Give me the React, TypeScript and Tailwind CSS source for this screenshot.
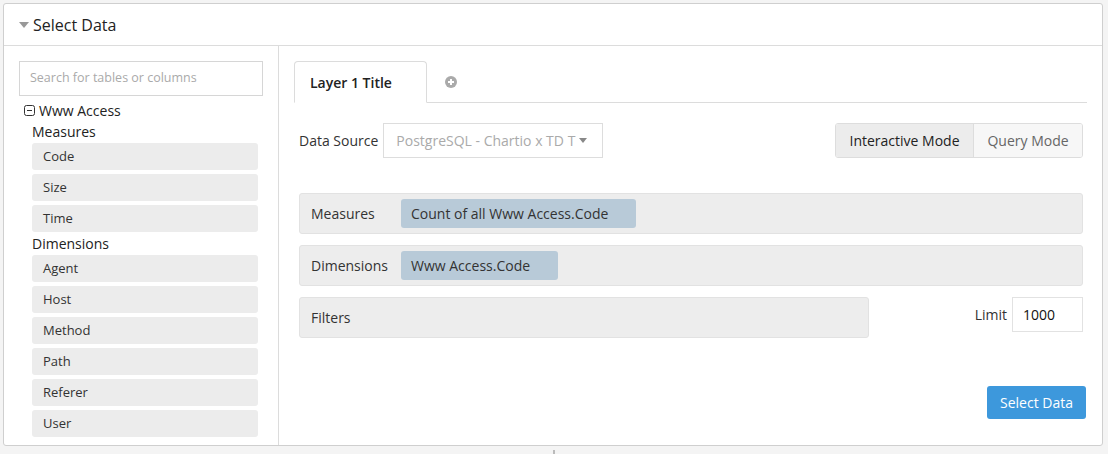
import { Fragment } from "react";

const measures = ["Code", "Size", "Time"];
const dimensions = ["Agent", "Host", "Method", "Path", "Referer", "User"];

function FieldItem({ label }: { label: string }) {
  return (
    <div className="flex h-[27px] items-center rounded-[3px] bg-[#ececec] pl-[11px] text-[13px] text-[#333]">
      {label}
    </div>
  );
}

function QueryRow({ label, pill, className }: { label: string; pill?: string; className?: string }) {
  return (
    <div
      className={`flex h-[41px] items-center rounded-[3px] border border-[#e2e2e2] bg-[#ededed] pl-[11px] ${className ?? ""}`}
    >
      <span className="w-[90px] text-[14px] text-[#333]">{label}</span>
      {pill && (
        <span className="flex h-[29px] items-center rounded-[3px] bg-[#b8cad8] pl-[10px] pr-[28px] text-[14px] text-[#333]">
          {pill}
        </span>
      )}
    </div>
  );
}

export default function App() {
  return (
    <div
      className="h-[454px] w-[1108px] bg-[#f4f4f4] pl-[3px] pt-[3px] text-[#333]"
      style={{ fontFamily: '"Open Sans", "Liberation Sans", sans-serif' }}
    >
      <div className="flex h-[443px] w-[1100px] flex-col rounded-[3px] border border-[#cfcfcf] bg-white">
        {/* header */}
        <div className="flex h-[42px] shrink-0 items-center border-b border-[#dcdcdc] pl-[15px]">
          <svg width="10" height="6" viewBox="0 0 10 6" className="mr-[4px] mt-[1px]">
            <path d="M0 0h10L5 6z" fill="#999" />
          </svg>
          <span className="text-[16px] text-[#222]">Select Data</span>
        </div>

        <div className="flex min-h-0 flex-1">
          {/* sidebar */}
          <div className="w-[275px] shrink-0 border-r border-[#dcdcdc] pl-[15px] pr-[15px] pt-[15px]">
            <div className="flex h-[35px] w-[244px] items-center border border-[#d6d6d6] pl-[10px] text-[12.5px] text-[#aaa]">
              Search for tables or columns
            </div>
            <div className="mt-[4px] flex h-[20px] items-center pl-[5px] text-[14px] text-[#222]">
              <svg width="11" height="11" viewBox="0 0 11 11" className="mr-[4px]">
                <rect x="0.5" y="0.5" width="10" height="10" rx="2" fill="none" stroke="#333" />
                <path d="M3 5.5h5" stroke="#333" />
              </svg>
              Www Access
            </div>
            <div className="ml-[13px] w-[226px]">
              {[
                ["Measures", measures],
                ["Dimensions", dimensions],
              ].map(([title, items]) => (
                <Fragment key={title as string}>
                  <div className="text-[14px] leading-[23px] text-[#222]">{title as string}</div>
                  <div className="flex flex-col gap-[4px]">
                    {(items as string[]).map((m) => (
                      <FieldItem key={m} label={m} />
                    ))}
                  </div>
                </Fragment>
              ))}
            </div>
          </div>

          {/* main */}
          <div className="flex-1 pl-[15px] pr-[15px] pt-[15px]">
            <div className="flex h-[42px] items-end border-b border-[#dcdcdc]">
              <div className="mb-[-1px] flex h-[42px] w-[133px] items-center rounded-t-[4px] border border-b-white border-[#dcdcdc] bg-white pl-[15px] text-[14px] font-semibold text-[#222]">
                Layer 1 Title
              </div>
              <div className="flex h-[41px] items-center pl-[18px]">
                <svg width="12" height="12" viewBox="0 0 12 12">
                  <circle cx="6" cy="6" r="6" fill="#aaa" />
                  <path d="M6 3v6M3 6h6" stroke="#fff" strokeWidth="2" />
                </svg>
              </div>
            </div>

            <div className="mt-[20px] flex items-center pl-[5px]">
              <span className="text-[14px] text-[#333]">Data Source</span>
              <div className="ml-[5px] flex h-[35px] w-[220px] items-center border border-[#ddd] pl-[12px] text-[14px] text-[#aaa]">
                PostgreSQL - Chartio x TD T
                <svg width="8" height="5" viewBox="0 0 8 5" className="ml-[4px]">
                  <path d="M0 0h8L4 5z" fill="#888" />
                </svg>
              </div>
              <div className="ml-auto mr-[4px] flex h-[35px] overflow-hidden rounded-[3px] border border-[#ddd] text-[14px]">
                <div className="flex w-[138px] items-center justify-center border-r border-[#ddd] bg-[#ececec] text-[#222]">
                  Interactive Mode
                </div>
                <div className="flex w-[108px] items-center justify-center bg-[#f7f7f7] text-[#666]">
                  Query Mode
                </div>
              </div>
            </div>

            <div className="mt-[35px] flex flex-col gap-[11px] pl-[5px] pr-[4px]">
              <QueryRow label="Measures" pill="Count of all Www Access.Code" />
              <QueryRow label="Dimensions" pill="Www Access.Code" />
              <div className="flex items-start">
                <QueryRow label="Filters" className="w-[570px]" />
                <div className="ml-auto flex items-center">
                  <span className="mr-[5px] text-[14px] text-[#333]">Limit</span>
                  <div className="flex h-[35px] w-[71px] items-center border border-[#e2e2e2] pl-[10px] text-[14px] text-[#111]">
                    1000
                  </div>
                </div>
              </div>
            </div>

            <div className="mt-[48px] flex justify-end">
              <button className="mr-[1px] h-[33px] w-[99px] rounded-[3px] bg-[#3d98dc] text-[14px] text-white">
                Select Data
              </button>
            </div>
          </div>
        </div>
      </div>
      <div className="ml-[550px] mt-[4px] h-[4px] w-[2px] bg-[#bbb]" />
    </div>
  );
}
